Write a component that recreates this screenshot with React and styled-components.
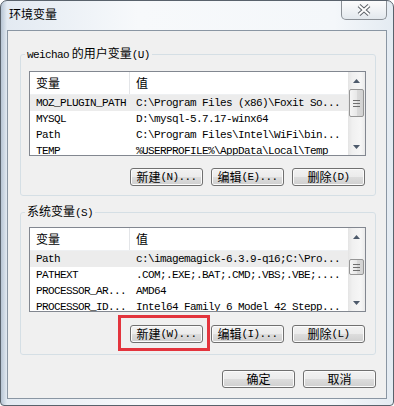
import styled, { createGlobalStyle } from 'styled-components'

const GlobalStyle = createGlobalStyle`
    * { box-sizing: border-box; }
    body {
        margin: 0;
        background: #fff;
        font-family: "Noto Sans CJK SC", "Liberation Sans", sans-serif;
        font-size: 12px;
        color: #000;
    }
`

const Window = styled.div`
    width: 394px;
    height: 406px;
    border: 1px solid #59626c;
    border-radius: 7px 7px 4px 4px;
    background: linear-gradient(90deg, #b7c5d4 0, #e3eaf2 6px, #f7f9fb 35%, #f4f7fa 85%, #e4ebf2 100%);
    padding: 0 6px 6px 6px;
    display: flex;
    flex-direction: column;
    overflow: hidden;
`

const TitleBar = styled.div`
    height: 29px;
    display: flex;
    justify-content: space-between;
    align-items: flex-start;
`

const Title = styled.div`
    padding: 6px 0 0 2px;
    font-size: 12px;
    line-height: 14px;
`

const CloseButton = styled.div`
    width: 46px;
    height: 20px;
    margin-top: -1px;
    border: 1px solid #8b9096;
    border-top: none;
    border-radius: 0 0 5px 5px;
    background: linear-gradient(#fdfdfd, #eef1f4 60%, #e3e8ed);
    display: flex;
    align-items: center;
    justify-content: center;
`

const Content = styled.div`
    flex: 1;
    background: #f0f0f0;
    border: 1px solid #8a96a3;
    padding: 15px 10px 0 12px;
    display: flex;
    flex-direction: column;
`

const Group = styled.fieldset`
    margin: ${p => p.$first ? '0' : '8px 0 0 0'};
    padding: ${p => p.$top}px 9px ${p => p.$bottom}px 8px;
    border: 1px solid #d5dfe5;
    border-radius: 3px;
    min-width: 0;
`

const Legend = styled.legend`
    padding: 0 2px;
    margin-left: -4px;
    font-size: 12px;
    line-height: 14px;
`

const Latin = styled.span`
    font-family: "Liberation Mono", monospace;
    font-size: 11px;
    letter-spacing: -0.6px;
`

const ListBox = styled.div`
    height: 85px;
    border: 1px solid #828790;
    background: #fff;
    display: flex;
    overflow: hidden;
`

const Table = styled.div`
    flex: 1;
    min-width: 0;
    overflow: hidden;
`

const HeaderRow = styled.div`
    display: grid;
    grid-template-columns: 100px 1fr;
    height: 23px;
    border-bottom: 1px solid #eef0f2;
`

const HeaderCell = styled.div`
    padding-left: 6px;
    line-height: 22px;
    font-size: 12px;
    &:first-child { border-right: 1px solid #e3e5e8; }
`

const Row = styled.div`
    display: grid;
    grid-template-columns: 100px 1fr;
    height: 16px;
    background: ${p => p.$selected ? '#ececec' : 'transparent'};
`

const Cell = styled.div`
    padding-left: 6px;
    line-height: 16px;
    white-space: nowrap;
    overflow: hidden;
    font-family: "Liberation Mono", monospace;
    font-size: 11px;
    letter-spacing: -0.6px;
    &:first-child { padding-right: 1px; }
`

const ScrollBar = styled.div`
    width: 17px;
    display: flex;
    flex-direction: column;
    background: linear-gradient(90deg, #e4e4e4 0, #f0f0f0 25%, #f6f6f6 75%, #eaeaea 100%);
`

const Arrow = styled.div`
    height: 17px;
    display: flex;
    align-items: center;
    justify-content: center;
`

const Track = styled.div`
    flex: 1;
    padding-top: ${p => p.$offset}px;
`

const Thumb = styled.div`
    height: ${p => p.$size}px;
    margin: 0 1px;
    border: 1px solid #969696;
    border-radius: 2px;
    background: linear-gradient(90deg, #f5f5f5, #e8e8e8 50%, #dadada 51%, #d2d2d2);
    display: flex;
    align-items: center;
    justify-content: center;
`

const ButtonRow = styled.div`
    display: flex;
    justify-content: flex-end;
    gap: 8px;
    margin-top: ${p => p.$gap}px;
    padding-right: 1px;
`

const Button = styled.button`
    width: 73px;
    height: 18px;
    padding: 0;
    border: 1px solid #707070;
    border-radius: 3px;
    background: linear-gradient(#f2f2f2 0, #ebebeb 50%, #dddddd 50%, #cfcfcf 100%);
    box-shadow: inset 0 0 0 1px #fbfbfb;
    font-family: "Noto Sans CJK SC", sans-serif;
    font-size: 12px;
    line-height: 14px;
    color: #000;
    display: flex;
    align-items: center;
    justify-content: center;
    white-space: nowrap;
`

const Highlight = styled.div`
    position: relative;
    display: flex;
    &::after {
        content: '';
        position: absolute;
        left: -12px;
        right: -7px;
        top: -10px;
        bottom: -8px;
        border: 3px solid #e3343d;
        pointer-events: none;
    }
`

const Footer = styled.div`
    display: flex;
    justify-content: flex-end;
    gap: 8px;
    margin-top: 15px;
`

const UpArrow = () => (
    <svg width="7" height="4" viewBox="0 0 7 4"><path d="M3.5 0 L7 4 L0 4 Z" fill="#4d5a6b" /></svg>
)

const DownArrow = () => (
    <svg width="7" height="4" viewBox="0 0 7 4"><path d="M0 0 L7 0 L3.5 4 Z" fill="#4d5a6b" /></svg>
)

const Grip = () => (
    <svg width="7" height="7" viewBox="0 0 7 7">
        <path d="M0 0.5H7M0 3.5H7M0 6.5H7" stroke="#6f6f6f" strokeWidth="1" />
    </svg>
)

const VarList = ({ rows, offset, size }) => (
    <ListBox>
        <Table>
            <HeaderRow>
                <HeaderCell>变量</HeaderCell>
                <HeaderCell>值</HeaderCell>
            </HeaderRow>
            {rows.map(([name, value], i) => (
                <Row key={name + i} $selected={i === 0}>
                    <Cell>{name}</Cell>
                    <Cell>{value}</Cell>
                </Row>
            ))}
        </Table>
        <ScrollBar>
            <Arrow><UpArrow /></Arrow>
            <Track $offset={offset}>
                <Thumb $size={size}><Grip /></Thumb>
            </Track>
            <Arrow><DownArrow /></Arrow>
        </ScrollBar>
    </ListBox>
)

const userVars = [
    ['MOZ_PLUGIN_PATH', 'C:\\Program Files (x86)\\Foxit So...'],
    ['MYSQL', 'D:\\mysql-5.7.17-winx64'],
    ['Path', 'C:\\Program Files\\Intel\\WiFi\\bin...'],
    ['TEMP', '%USERPROFILE%\\AppData\\Local\\Temp'],
]

const systemVars = [
    ['Path', 'c:\\imagemagick-6.3.9-q16;C:\\Pro...'],
    ['PATHEXT', '.COM;.EXE;.BAT;.CMD;.VBS;.VBE;....'],
    ['PROCESSOR_AR...', 'AMD64'],
    ['PROCESSOR_ID...', 'Intel64 Family 6 Model 42 Stepp...'],
]

const App = () => {
    return (
        <>
            <GlobalStyle />
            <Window>
                <TitleBar>
                    <Title>环境变量</Title>
                    <CloseButton>
                        <svg width="14" height="12" viewBox="0 0 14 12">
                            <path d="M2 1.5 L12 10.5 M12 1.5 L2 10.5" stroke="#5f646a" strokeWidth="4" />
                            <path d="M2 1.5 L12 10.5 M12 1.5 L2 10.5" stroke="#fff" strokeWidth="2" />
                        </svg>
                    </CloseButton>
                </TitleBar>
                <Content>
                    <Group $first $top={9} $bottom={9}>
                        <Legend><Latin>weichao</Latin> 的用户变量<Latin>(U)</Latin></Legend>
                        <VarList rows={userVars} offset={0} size={28} />
                        <ButtonRow $gap={12}>
                            <Button>新建<Latin>(N)...</Latin></Button>
                            <Button>编辑<Latin>(E)...</Latin></Button>
                            <Button>删除<Latin>(D)</Latin></Button>
                        </ButtonRow>
                    </Group>
                    <Group $top={7} $bottom={11}>
                        <Legend>系统变量<Latin>(S)</Latin></Legend>
                        <VarList rows={systemVars} offset={14} size={16} />
                        <ButtonRow $gap={13}>
                            <Highlight>
                                <Button>新建<Latin>(W)...</Latin></Button>
                            </Highlight>
                            <Button>编辑<Latin>(I)...</Latin></Button>
                            <Button>删除<Latin>(L)</Latin></Button>
                        </ButtonRow>
                    </Group>
                    <Footer>
                        <Button>确定</Button>
                        <Button>取消</Button>
                    </Footer>
                </Content>
            </Window>
        </>
    )
}

export default App
